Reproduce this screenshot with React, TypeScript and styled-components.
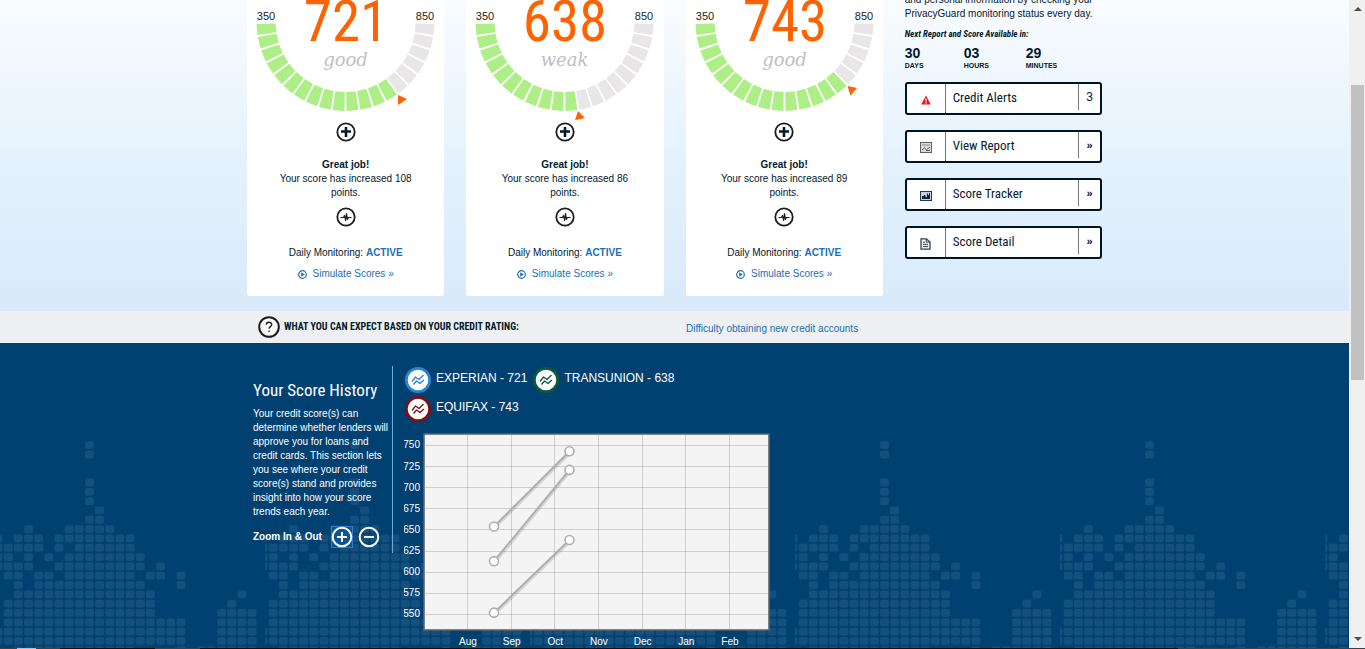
import React from "react";
import styled, { createGlobalStyle } from "styled-components";

const SANS = '"Liberation Sans", Arial, sans-serif';
const NARROW = '"Roboto Condensed", "Arial Narrow", "Liberation Sans", sans-serif';
const SERIF = '"DejaVu Serif", Georgia, serif';
const INK = "#001a2e";
const LINK = "#1a6fb5";

const GlobalStyle = createGlobalStyle`
  *, *::before, *::after { box-sizing: border-box; }
  body { margin: 0; font-family: ${SANS}; font-size: 10px; line-height: 14px; color: ${INK}; }
  h2, h3, p, ul, ol, dl, dd { margin: 0; padding: 0; }
  ul { list-style: none; }
  a { color: ${LINK}; text-decoration: none; }
  svg { display: block; }
`;

const Frame = styled.div`
  display: grid;
  grid-template-columns: 1fr 16px;
  grid-template-rows: 1fr 1px;
  height: 100vh;
  overflow: hidden;
`;

const Page = styled.main`
  display: flex;
  flex-direction: column;
  min-width: 0;
  min-height: 0;
  overflow: hidden;
`;

const Container = styled.div`
  width: 100%;
  max-width: 855px;
  margin: 0 auto;
`;

const Hero = styled.section`
  flex: none;
  padding-bottom: 15px;
  background: linear-gradient(#f9fcff, #eff7fe 25%, #e3f1fc 55%, #d8eafa);
`;

const Columns = styled(Container)`
  display: grid;
  grid-template-columns: repeat(4, 1fr);
  column-gap: 22px;
`;

const Card = styled.article`
  display: flex;
  flex-direction: column;
  align-items: center;
  padding-bottom: 15px;
  background: #fff;
  border-radius: 0 0 3px 3px;
  text-align: center;
`;

const Gauge = styled.svg`
  width: 197px;
  height: 122px;
`;

const GaugeScore = styled.text`
  font: 57px ${NARROW};
  fill: #ff6200;
  text-anchor: middle;
`;

const GaugeRating = styled.text`
  font: italic 18px ${SERIF};
  fill: #c0c0c0;
  text-anchor: middle;
`;

const GaugeLimit = styled.text`
  font: 11px ${SANS};
  fill: #222;
  text-anchor: middle;
`;

const RoundButton = styled.button`
  width: 20px;
  height: 20px;
  padding: 0;
  border: 0;
  background: none;
  color: #1d1d1f;
`;

const CardNote = styled.p`
  width: 140px;
  margin: 16px 0 7px;
`;

const Monitoring = styled.p`
  margin: 19px 0 7px;
`;

const SimulateLink = styled.a`
  display: flex;
  align-items: center;
  gap: 6px;
`;

const Aside = styled.aside`
  display: flex;
  flex-direction: column;
  margin-top: -7px;
`;

const NextReport = styled.h3`
  margin-top: 6px;
  font: italic bold 9px/14px ${NARROW};
`;

const Countdown = styled.dl`
  display: grid;
  grid-template-columns: 59px 62px 1fr;
  margin-top: 4px;
`;

const CountdownUnit = styled.div`
  display: flex;
  flex-direction: column-reverse;

  dd { font-size: 14px; line-height: 16px; font-weight: bold; }
  dt { font-size: 7px; line-height: 10px; font-weight: bold; }
`;

const Actions = styled.nav`
  display: grid;
  gap: 15px;
  margin-top: 11px;
`;

const Action = styled.a`
  display: grid;
  grid-template-columns: 39px 1fr 22px;
  height: 33px;
  border: 2px solid #001428;
  border-radius: 3px;
  background: #fff;
  color: ${INK};
`;

const ActionIcon = styled.span`
  display: grid;
  place-items: center;
  padding-top: 2px;
  border-right: 1px solid #70757a;
`;

const ActionLabel = styled.span`
  padding-left: 7px;
  font: 13px/28px ${NARROW};
`;

const ActionEnd = styled.span<{ $count?: boolean }>`
  height: 26px;
  border-left: 1px solid #70757a;
  font-size: ${(p) => (p.$count ? 12 : 11)}px;
  font-weight: ${(p) => (p.$count ? "normal" : "bold")};
  line-height: 26px;
  text-align: center;
`;

const ExpectBar = styled.section`
  flex: none;
  background: #edeff1;
`;

const ExpectRow = styled(Container)`
  display: grid;
  grid-template-columns: 439px 1fr;
  align-items: center;
  height: 32px;
`;

const ExpectTitle = styled.h3`
  display: flex;
  align-items: center;
  gap: 4px;
  padding-left: 11px;
  font: bold 10px/14px ${NARROW};
`;

const ExpectLink = styled.a`
  padding-top: 3px;
`;

const History = styled.section`
  position: relative;
  flex: 1;
  min-height: 0;
  padding-top: 23px;
  overflow: hidden;
  background: #004171;
  color: #fff;
`;

const Skyline = styled.svg`
  position: absolute;
  inset: 0;
  width: 100%;
  height: 100%;
`;

const HistoryRow = styled(Container)`
  position: relative;
  display: flex;
  align-items: flex-start;
  gap: 11px;
  padding-left: 6px;
`;

const HistoryIntro = styled.div`
  width: 140px;
  padding: 12px 0 5px;
  border-right: 1px solid #6fa8d6;
`;

const HistoryTitle = styled.h2`
  font: 17px/24px ${NARROW};
  white-space: nowrap;
`;

const HistoryText = styled.p`
  margin: 5px 0 7px;
`;

const ZoomRow = styled.div`
  display: flex;
  align-items: center;
  gap: 5px;
  font-weight: bold;
  white-space: nowrap;
`;

const ZoomLabel = styled.span`
  margin-right: 4px;
`;

const ZoomButton = styled.button<{ $active?: boolean }>`
  flex: none;
  width: 22px;
  height: 22px;
  padding: 0;
  border: 0;
  color: #fff;
  background: ${(p) => (p.$active ? "#0d5494" : "transparent")};
  box-shadow: ${(p) => (p.$active ? "inset 0 0 0 1px #3a78c8" : "none")};
`;

const HistoryChart = styled.div`
  width: 366px;
`;

const Legend = styled.ul`
  display: flex;
  flex-wrap: wrap;
  gap: 1px 5px;
`;

const LegendItem = styled.li`
  display: flex;
  gap: 4px;
  font-size: 12px;
  line-height: 24px;
`;

const Plot = styled.svg`
  width: 366px;
  height: 219px;
  margin-top: 7px;
`;

const AxisLabel = styled.text`
  font: 10px ${SANS};
  fill: #fff;
`;

const Scrollbar = styled.div`
  display: flex;
  flex-direction: column;
  align-items: center;
  padding-left: 1px;
  background: #f0f0f0;
`;

const Arrow = styled.svg`
  width: 14px;
  height: 17px;
`;

const Spacer = styled.div<{ $grow: number }>`
  flex: ${(p) => p.$grow};
`;

const Thumb = styled(Spacer)`
  width: 13px;
  background: #c1c1c1;
`;

const BottomEdge = styled.div`
  grid-column: 1 / -1;
  background: linear-gradient(
    90deg,
    #34424f 17px, #9cc4e4 17px 36px, #34424f 36px 60px, #0a0d12 60px 155px,
    #34424f 155px 200px, #0a0d12 200px 1178px, #34424f 1178px
  );
`;

const GAUGE = { cx: 98.5, cy: 22, inner: 70, outer: 89, count: 20 };

function polar(radius: number, degrees: number) {
  const a = ((180 - degrees) * Math.PI) / 180;
  return `${(GAUGE.cx + radius * Math.cos(a)).toFixed(2)},${(GAUGE.cy + radius * Math.sin(a)).toFixed(2)}`;
}

function segment(index: number) {
  const step = 180 / GAUGE.count;
  const from = index * step + (index === 0 ? 1.3 : 0.65);
  const to = (index + 1) * step - (index === GAUGE.count - 1 ? 1.3 : 0.65);
  return [polar(GAUGE.outer, from), polar(GAUGE.outer, to), polar(GAUGE.inner, to), polar(GAUGE.inner, from)].join(" ");
}

type Score = { score: number; rating: string; filled: number; marker: string; gain: number };

const scores: Score[] = [
  { score: 721, rating: "good", filled: 14, marker: "151,95 151,105 160,99", gain: 108 },
  { score: 638, rating: "weak", filled: 11, marker: "112,111 109,120 119,118", gain: 86 },
  { score: 743, rating: "good", filled: 15, marker: "161.5,86 171,88 164.5,95.5", gain: 89 },
];

function ScoreCard({ score, rating, filled, marker, gain }: Score) {
  return (
    <Card>
      <Gauge viewBox="0 0 197 122">
        {Array.from({ length: GAUGE.count }, (_, i) => (
          <polygon key={i} points={segment(i)} fill={i < filled ? "#aeee87" : "#e9e6e8"} />
        ))}
        <polygon points={marker} fill="#ff6200" />
        <GaugeLimit x="19" y="20">350</GaugeLimit>
        <GaugeLimit x="178" y="20">850</GaugeLimit>
        <GaugeScore x="99" y="41">{score}</GaugeScore>
        <GaugeRating x="98.5" y="66">{rating}</GaugeRating>
      </Gauge>
      <RoundButton aria-label="More about this score">
        <svg width="20" height="20" viewBox="0 0 20 20" fill="none" stroke="currentColor">
          <circle cx="10" cy="10" r="8.7" strokeWidth="1.8" fill="#fff" />
          <path d="M10 5v10M5 9.5h10" stroke="#001a2e" strokeWidth="2.6" />
        </svg>
      </RoundButton>
      <CardNote>
        <strong>Great job!</strong>
        <br />
        Your score has increased {gain} points.
      </CardNote>
      <RoundButton aria-label="Daily monitoring">
        <svg width="20" height="20" viewBox="0 0 20 20" fill="none" stroke="currentColor">
          <circle cx="10" cy="10" r="8.7" strokeWidth="1.8" fill="#fff" />
          <path d="M4.5 10.5h3l1-2 1.2 5 .8-7 1 6 .7-2h3.3" strokeWidth="1.2" strokeLinejoin="round" />
        </svg>
      </RoundButton>
      <Monitoring>
        Daily Monitoring: <a href="#monitoring"><strong>ACTIVE</strong></a>
      </Monitoring>
      <SimulateLink href="#simulate">
        <svg width="9" height="9" viewBox="0 0 9 9">
          <circle cx="4.5" cy="4.5" r="3.8" fill="none" stroke={LINK} strokeWidth="1.2" />
          <path d="M3.2 2.2 6.8 4.5 3.2 6.8z" fill={LINK} />
        </svg>
        Simulate Scores »
      </SimulateLink>
    </Card>
  );
}

const AlertIcon = () => (
  <svg width="10" height="10" viewBox="0 0 10 10">
    <path d="M5 .5 9.8 9.5H.2z" fill="#e01b1b" />
    <path d="M5 3.5v3M5 7.3v1.2" stroke="#fff" strokeWidth="1.2" />
  </svg>
);

const ReportIcon = () => (
  <svg width="12" height="11" viewBox="0 0 12 11" fill="none" stroke="#5c6064">
    <rect x=".5" y=".5" width="11" height="10" fill="#dcdcdc" />
    <path d="M2 3h8" stroke="#8b8f93" />
    <path d="M2 8l2.5-2 2 1.8L10 5M6 8.5h4" />
  </svg>
);

const TrackerIcon = () => (
  <svg width="12" height="10" viewBox="0 0 12 10">
    <rect x=".5" y=".5" width="11" height="9" fill="#c9d2da" stroke="#22384c" />
    <path d="M2 8V5h2V4h1.5v2H7V2.5h1V4h1V2h1v6z" fill="#0c2338" />
  </svg>
);

const DetailIcon = () => (
  <svg width="11" height="12" viewBox="0 0 11 12" fill="none" stroke="#36424e">
    <path d="M1 .8h5.5L10 4v7.2H1z" fill="#f3f4f6" strokeWidth="1.3" />
    <path d="M6.3 1v3.2H10M3 4.2h2M3 6.4h5M3 8.6h5" />
  </svg>
);

const actions = [
  { label: "Credit Alerts", icon: <AlertIcon />, end: "3", count: true },
  { label: "View Report", icon: <ReportIcon />, end: "»" },
  { label: "Score Tracker", icon: <TrackerIcon />, end: "»" },
  { label: "Score Detail", icon: <DetailIcon />, end: "»" },
];

const countdown = [
  ["30", "DAYS"],
  ["03", "HOURS"],
  ["29", "MINUTES"],
];

/* Lit cells of the dotted skyline: [row, [first column, last column], ...] */
const skyline: [number, ...[number, number][]][] = [
  [0, [9, 9]],
  [1, [9, 9]],
  [4, [9, 9]],
  [5, [9, 9]],
  [6, [9, 9]],
  [7, [10, 10]],
  [8, [9, 10]],
  [9, [3, 3], [7, 11]],
  [10, [0, 0], [2, 4], [6, 13]],
  [11, [0, 4], [6, 6], [8, 13]],
  [12, [0, 1], [3, 3], [5, 5], [7, 14]],
  [13, [0, 3], [6, 14], [16, 16]],
  [14, [1, 2], [4, 5], [7, 13], [15, 16], [18, 18]],
  [15, [2, 2], [4, 14], [18, 18]],
  [16, [2, 15], [24, 24]],
  [17, [1, 15], [23, 23]],
  [18, [1, 15], [22, 25]],
  [19, [1, 18], [22, 25]],
  [20, [0, 18], [22, 25]],
  [21, [0, 18], [22, 25]],
  [22, [2, 13], [18, 18], [20, 25]],
];

const cells = skyline.flatMap(([row, ...spans]) =>
  (spans as [number, number][]).flatMap(([a, b]) =>
    Array.from({ length: b - a + 1 }, (_, i) => ({ x: (a + i - 1) * 10.16 + 3.8, y: row * 9.32 + 98.3 }))
  )
);

const bureaus = [
  { name: "EXPERIAN", score: 721, color: "#2b84cc" },
  { name: "TRANSUNION", score: 638, color: "#0b5a3a" },
  { name: "EQUIFAX", score: 743, color: "#7d1018" },
];

const yTicks = [750, 725, 700, 675, 650, 625, 600, 575, 550];
const months = ["Aug", "Sep", "Oct", "Nov", "Dec", "Jan", "Feb"];
const yOf = (value: number) => 15.4 + ((750 - value) / 25) * 21.12;
const series = [
  [654, 743],
  [613, 721],
  [552, 638],
];

function BureauIcon({ color }: { color: string }) {
  return (
    <svg width="28" height="28" viewBox="0 0 28 28" fill="none">
      <circle cx="14" cy="14" r="11.7" fill="#fff" stroke={color} strokeWidth="2.8" />
      <g stroke={color} strokeWidth="1.3" strokeLinejoin="round">
        <path d="M8 15.5 11.5 11l3.5 2.5 4.5-4.5" />
        <path d="M9.5 18.5l3-3.5 3.5 2.5 4-3.5" />
      </g>
    </svg>
  );
}

function ZoomGlyph({ plus }: { plus?: boolean }) {
  return (
    <svg width="22" height="22" viewBox="0 0 22 22" fill="none" stroke="currentColor" strokeWidth="2">
      <circle cx="11" cy="11" r="9.3" />
      <path d={plus ? "M11 6v10M6 11h10" : "M6 11h10"} />
    </svg>
  );
}

function ScorePlot() {
  return (
    <Plot viewBox="0 0 366 219">
      <rect x="20" y="4" width="345" height="196" fill="#f4f4f4" stroke="#5f6468" strokeWidth="1.6" />
      <g stroke="#000" strokeOpacity="0.15" shapeRendering="crispEdges">
        {yTicks.map((t) => (
          <path key={t} d={`M21 ${yOf(t)}h343`} />
        ))}
        {months.map((m, i) => (
          <path key={m} d={`M${63.4 + i * 43.65} 5v194`} />
        ))}
      </g>
      {series.map(([from, to]) => (
        <g key={from}>
          <path d={`M90.5 ${yOf(from) + 1.5}L166 ${yOf(to) + 1.5}`} stroke="#000" strokeOpacity="0.12" strokeWidth="3" />
          <path d={`M90 ${yOf(from)}L165.5 ${yOf(to)}`} stroke="#afafaf" strokeWidth="2" />
          <circle cx="90" cy={yOf(from)} r="4.5" fill="#fff" stroke="#afafaf" strokeWidth="1.6" />
          <circle cx="165.5" cy={yOf(to)} r="4.5" fill="#fff" stroke="#afafaf" strokeWidth="1.6" />
        </g>
      ))}
      {yTicks.map((t) => (
        <AxisLabel key={t} x="16" y={yOf(t) + 3} textAnchor="end">{t}</AxisLabel>
      ))}
      {months.map((m, i) => (
        <AxisLabel key={m} x={64 + i * 43.65} y="215" textAnchor="middle">{m}</AxisLabel>
      ))}
    </Plot>
  );
}

export default function App() {
  return (
    <>
      <GlobalStyle />
      <Frame>
        <Page>
          <Hero>
            <Columns>
              {scores.map((s) => (
                <ScoreCard key={s.score} {...s} />
              ))}
              <Aside>
                <p>and personal information by checking your PrivacyGuard monitoring status every day.</p>
                <NextReport>Next Report and Score Available in:</NextReport>
                <Countdown>
                  {countdown.map(([value, unit]) => (
                    <CountdownUnit key={unit}>
                      <dt>{unit}</dt>
                      <dd>{value}</dd>
                    </CountdownUnit>
                  ))}
                </Countdown>
                <Actions>
                  {actions.map((a) => (
                    <Action key={a.label} href="#report">
                      <ActionIcon>{a.icon}</ActionIcon>
                      <ActionLabel>{a.label}</ActionLabel>
                      <ActionEnd $count={a.count}>{a.end}</ActionEnd>
                    </Action>
                  ))}
                </Actions>
              </Aside>
            </Columns>
          </Hero>
          <ExpectBar>
            <ExpectRow>
              <ExpectTitle>
                <svg width="22" height="22" viewBox="0 0 22 22" fill="none" stroke="#1d1d1f">
                  <circle cx="11" cy="11" r="9.8" strokeWidth="2" fill="#fff" />
                  <path d="M8.3 8.8c0-3.4 5.4-3.3 5.4-.2 0 2-2.6 2-2.6 4.2M11.1 14.4V16" strokeWidth="1.4" />
                </svg>
                WHAT YOU CAN EXPECT BASED ON YOUR CREDIT RATING:
              </ExpectTitle>
              <ExpectLink href="#rating">Difficulty obtaining new credit accounts</ExpectLink>
            </ExpectRow>
          </ExpectBar>
          <History>
            <Skyline aria-hidden="true">
              <defs>
                <pattern id="skyline" width="265" height="320" patternUnits="userSpaceOnUse">
                  {cells.map((c, i) => (
                    <rect key={i} x={c.x} y={c.y} width="8.8" height="7.8" rx="2.2" fill="#14507d" />
                  ))}
                </pattern>
              </defs>
              <rect width="100%" height="100%" fill="url(#skyline)" />
            </Skyline>
            <HistoryRow>
              <HistoryIntro>
                <HistoryTitle>Your Score History</HistoryTitle>
                <HistoryText>
                  Your credit score(s) can determine whether lenders will approve you for loans and credit cards. This
                  section lets you see where your credit score(s) stand and provides insight into how your score trends
                  each year.
                </HistoryText>
                <ZoomRow>
                  <ZoomLabel>Zoom In &amp; Out</ZoomLabel>
                  <ZoomButton $active aria-label="Zoom in">
                    <ZoomGlyph plus />
                  </ZoomButton>
                  <ZoomButton aria-label="Zoom out">
                    <ZoomGlyph />
                  </ZoomButton>
                </ZoomRow>
              </HistoryIntro>
              <HistoryChart>
                <Legend>
                  {bureaus.map((b) => (
                    <LegendItem key={b.name}>
                      <BureauIcon color={b.color} />
                      {b.name} - {b.score}
                    </LegendItem>
                  ))}
                </Legend>
                <ScorePlot />
              </HistoryChart>
            </HistoryRow>
          </History>
        </Page>
        <Scrollbar aria-hidden="true">
          <Arrow viewBox="0 0 14 17">
            <path d="M7 7l4 4H3z" fill="#505050" />
          </Arrow>
          <Spacer $grow={68} />
          <Thumb $grow={295} />
          <Spacer $grow={251} />
          <Arrow viewBox="0 0 14 17">
            <path d="M7 10l4-4H3z" fill="#505050" />
          </Arrow>
        </Scrollbar>
        <BottomEdge />
      </Frame>
    </>
  );
}
